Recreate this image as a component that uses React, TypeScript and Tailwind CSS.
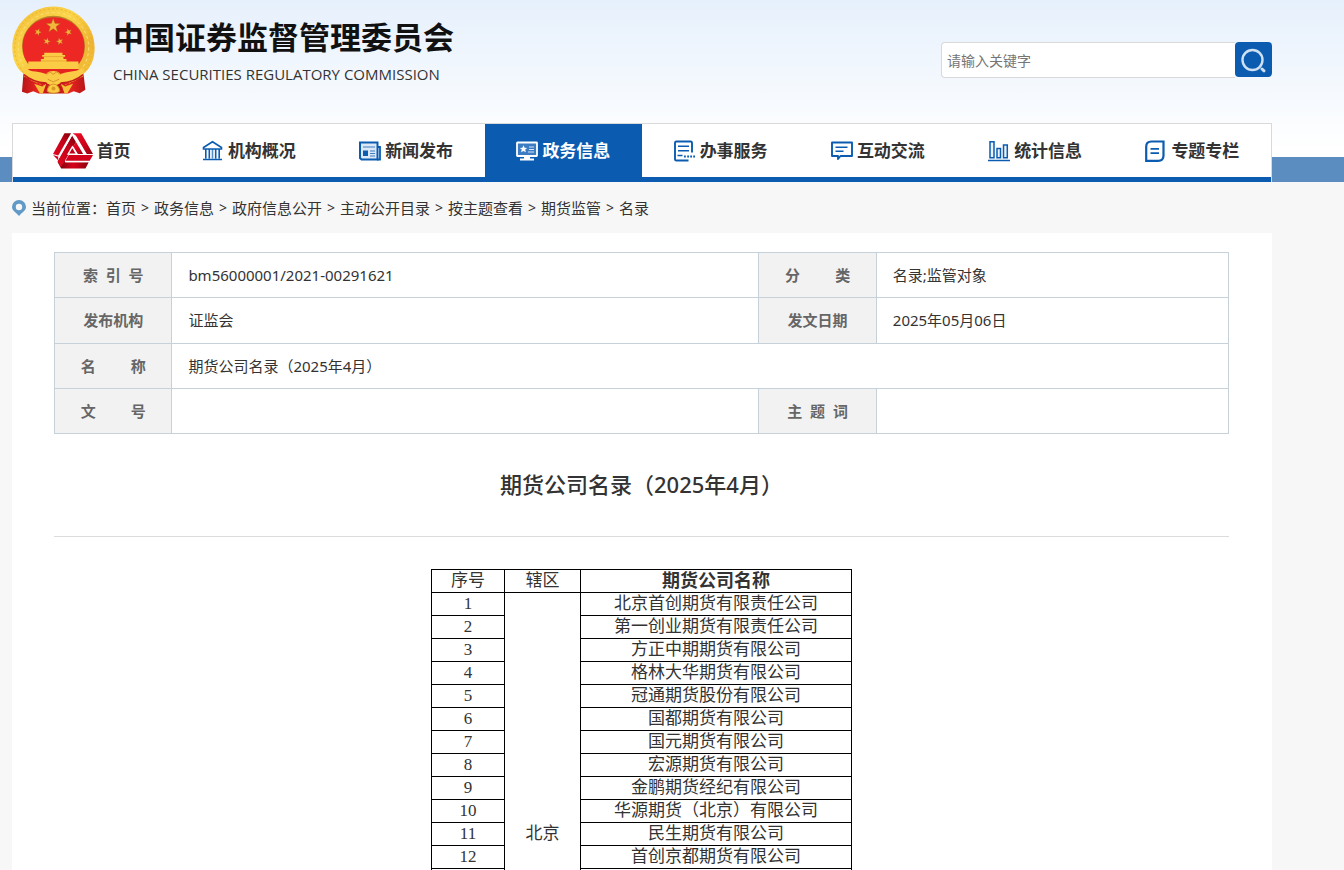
import type { ReactNode } from "react";

const STAR =
  "M0-10 2.4-3.2 9.5-3.1 3.8 1.2 5.9 8.1 0 4 -5.9 8.1 -3.8 1.2 -9.5-3.1 -2.4-3.2Z";

function Emblem() {
  return (
    <svg viewBox="36 16 250 264" className="h-[88px] w-[83px] shrink-0" aria-hidden="true">
      <defs>
        <linearGradient id="gold" x1="0" y1="0" x2="1" y2="1">
          <stop offset="0" stopColor="#f2bd3c" />
          <stop offset="0.4" stopColor="#fbd548" />
          <stop offset="0.7" stopColor="#eeb432" />
          <stop offset="1" stopColor="#f7c93f" />
        </linearGradient>
        <linearGradient id="drape" x1="0" y1="0" x2="1" y2="0">
          <stop offset="0" stopColor="#b81418" />
          <stop offset="0.25" stopColor="#e8251f" />
          <stop offset="0.5" stopColor="#a80f14" />
          <stop offset="0.75" stopColor="#e8251f" />
          <stop offset="1" stopColor="#b81418" />
        </linearGradient>
      </defs>
      <path d="M72 200 66 274 82 279 100 272 116 279H206L222 272 240 278 257 268 249 200Z" fill="url(#drape)" />
      <path d="M161 17C92 17 37 74 37 141c0 34 11 60 33 78 14 12 24 27 46 27h90c22 0 32-15 46-27 22-18 33-44 33-78C285 74 230 17 161 17Z" fill="url(#gold)" />
      <circle cx="161" cy="141" r="117" fill="none" stroke="#e3a52a" strokeWidth="2" strokeDasharray="6 7" />
      <circle cx="161" cy="141" r="106" fill="none" stroke="#fbe07a" strokeWidth="3" strokeDasharray="9 8" />
      <ellipse cx="161" cy="136" rx="95" ry="91" fill="#b9862a" />
      <path d="M161 49c53 0 93 38 93 88 0 20-5 38-16 52H84c-11-14-16-32-16-52 0-50 40-88 93-88Z" fill="#ec2724" />
      <g fill="#f2b63a" stroke="#b5521c" strokeWidth="0.6">
        <path d={STAR} transform="translate(160 75) scale(2.3)" />
        <path d={STAR} transform="translate(114 94) rotate(20) scale(1.15)" />
        <path d={STAR} transform="translate(206 94) rotate(-20) scale(1.15)" />
        <path d={STAR} transform="translate(141 122) rotate(15) scale(1.15)" />
        <path d={STAR} transform="translate(180 122) rotate(-15) scale(1.15)" />
      </g>
      <path d="M133 156h55v7h8v5h-5v7h9v8h36v22H85v-22h38v-8h9v-7h-5v-5h6Z" fill="#fbcb45" />
      <path d="M131 168h60M124 181h76" stroke="#e09a2c" strokeWidth="2" />
      <path d="M84 205h154l-20 18H104Z" fill="#e5241f" />
      <path d="M70 205c26 8 50 8 69 15 6-12 36-12 43 0 20-7 44-7 70-15l-1 22c-22 13-44 18-67 20l-23 12-23-12c-22-2-44-7-66-20Z" fill="#fbcb45" />
      <path d="M72 222c20 18 46 24 68 26M250 222c-20 18-46 24-68 26" fill="none" stroke="#c51d1c" strokeWidth="5" />
      <path d="M140 222l10-8 10 7 11-7 11 8M144 236l16 8 18-8" fill="none" stroke="#d8952a" strokeWidth="3" />
      <path d="M103 250l24 8 12-8-10 28h-9ZM220 250l-24 8-12-8 10 28h9Z" fill="#f6bf3a" />
      <path d="M142 272c2-28 35-28 38 0-10 8-28 8-38 0Z" fill="#fbcb45" stroke="#d18d22" strokeWidth="3" />
      <circle cx="161" cy="264" r="6" fill="#d99a25" />
    </svg>
  );
}

function KnotIcon() {
  return (
    <svg viewBox="0 0 122 109" className="h-9 w-10 shrink-0" aria-hidden="true">
      <defs>
        <linearGradient id="knotL" x1="0" y1="1" x2="1" y2="0">
          <stop offset="0" stopColor="#e00a22" />
          <stop offset="0.6" stopColor="#c40018" />
          <stop offset="1" stopColor="#7a000a" />
        </linearGradient>
        <linearGradient id="knotR" x1="0" y1="0" x2="1" y2="1">
          <stop offset="0" stopColor="#f01028" />
          <stop offset="0.6" stopColor="#cc001a" />
          <stop offset="1" stopColor="#8e000c" />
        </linearGradient>
        <linearGradient id="knotB" x1="0" y1="0" x2="1" y2="0">
          <stop offset="0" stopColor="#6e0008" />
          <stop offset="0.5" stopColor="#d8001c" />
          <stop offset="1" stopColor="#8a000c" />
        </linearGradient>
      </defs>
      <path d="M35 0H55L16 68 0 64Z" fill="url(#knotL)" />
      <path d="M0 67 17 72 15 82Z" fill="#d2001b" />
      <path d="M60 0H86L122 64H103L70 8Z" fill="url(#knotR)" />
      <path d="M38 89H109L99 108H25L14 88 26 70Z" fill="url(#knotB)" />
      <path d="M58 7 70 27 34 88 24 104 14 86Z" fill="url(#knotL)" />
      <path d="M70 27 92 64H76L61 40Z" fill="url(#knotR)" />
      <path d="M48 67H122L112 84H38Z" fill="#d2001b" />
      <path d="M57 6 17 75M68 12 98 64M37 87H110" stroke="#fff" strokeWidth="4" fill="none" />
      <path d="M59 42 46 64H72Z" fill="#c00018" stroke="#fff" strokeWidth="4" />
    </svg>
  );
}

function Glyph({ children }: { children: ReactNode }) {
  return (
    <svg viewBox="0 0 22 22" className="size-[22px] shrink-0" fill="none" stroke="currentColor" strokeWidth="1.8" aria-hidden="true">
      {children}
    </svg>
  );
}

const NAV: { label: string; icon: ReactNode; active?: boolean }[] = [
  { label: "首页", icon: <KnotIcon /> },
  {
    label: "机构概况",
    icon: (
      <Glyph>
        <path d="M10.500 1.800 1.500 7.500V9h18V7.500ZM3.800 9v9.500M7.300 9v9.500M13.700 9v9.500M17.200 9v9.500M1 19.500h19" strokeWidth="1.600" />
        <path d="M10.500 9v9.500" strokeWidth="1.600" opacity="0.7" />
      </Glyph>
    ),
  },
  {
    label: "新闻发布",
    icon: (
      <Glyph>
        <path d="M1 2.500h17.500v17H2.500L1 18Z" fill="#dce8f5" strokeWidth="2" />
        <path d="M18.500 7H21v12.500h-3" />
        <path d="M4 7h12M11 11h5M11 13.500h5M11 16h5" strokeWidth="1.200" opacity="0.750" />
        <path d="M4 10.500h5v5.500H4Z" fill="currentColor" stroke="none" />
      </Glyph>
    ),
  },
  {
    label: "政务信息",
    active: true,
    icon: (
      <Glyph>
        <rect x="1" y="2.500" width="20" height="13.500" rx="0.500" fill="#3b7cc3" />
        <path d="m7.500 5.300 1.100 2.400 2.600.2-2 1.700.7 2.700-2.400-1.400-2.400 1.400.7-2.700-2-1.700 2.600-.2Z" fill="currentColor" stroke="none" />
        <path d="M13 7h5M13 9.500h5M12 12h6" strokeWidth="1.100" opacity="0.800" />
        <path d="M8 16h6v2.500h4V20.500H4V18.500h4Z" fill="currentColor" stroke="none" />
      </Glyph>
    ),
  },
  {
    label: "办事服务",
    icon: (
      <Glyph>
        <path d="M18 12.500V2.800Q18 1.500 16.700 1.500H2.300Q1 1.500 1 2.800V19.200Q1 20.500 2.300 20.500H14.500" strokeWidth="1.900" />
        <path d="M4 6.200h11M4 10.800h11M3.500 15.500h5" strokeWidth="1.500" />
        <path d="M10 16.500h1.800M13.200 16.500h1.800M16.200 16.500h1.800M19.200 16.500h1.800" strokeWidth="1.800" />
      </Glyph>
    ),
  },
  {
    label: "互动交流",
    icon: (
      <Glyph>
        <path d="M1 2.500h20v13.500H9.500L7 19v-3H1Z" strokeWidth="1.900" strokeLinejoin="round" />
        <path d="M4.500 7.200h12M4.500 11.200h8" strokeWidth="1.400" />
      </Glyph>
    ),
  },
  {
    label: "统计信息",
    icon: (
      <Glyph>
        <path d="M2 1.700h4v16H2ZM9 8.500h3.500v9.200H9ZM15.500 5h3.800v12.700h-3.800Z" strokeWidth="1.500" fill="#eaf2fa" />
        <path d="M0 20.500h22" strokeWidth="1.500" />
      </Glyph>
    ),
  },
  {
    label: "专题专栏",
    icon: (
      <Glyph>
        <path d="M6.500 1.500H18.500V15.500Q18.500 20.800 13.200 20.800H1.200V6.800Q1.200 1.500 6.500 1.500Z" strokeWidth="2.200" />
        <path d="M5.500 8.800h8.500M5.500 13.200h8.500" strokeWidth="1.700" />
      </Glyph>
    ),
  },
];

const CRUMBS = ["首页", "政务信息", "政府信息公开", "主动公开目录", "按主题查看", "期货监管", "名录"];

const COMPANIES = [
  "北京首创期货有限责任公司",
  "第一创业期货有限责任公司",
  "方正中期期货有限公司",
  "格林大华期货有限公司",
  "冠通期货股份有限公司",
  "国都期货有限公司",
  "国元期货有限公司",
  "宏源期货有限公司",
  "金鹏期货经纪有限公司",
  "华源期货（北京）有限公司",
  "民生期货有限公司",
  "首创京都期货有限公司",
];

const REGION_ROWS = 21;

function Th({ children }: { children: ReactNode }) {
  return (
    <th scope="row" className="whitespace-pre border border-[#c6d1da] bg-[#f2f2f2] p-0 text-center font-bold text-[#666]">
      {children}
    </th>
  );
}

function Td({ children, colSpan }: { children?: ReactNode; colSpan?: number }) {
  return (
    <td colSpan={colSpan} className="border border-[#c6d1da] px-4 py-0 text-[#333]">
      {children}
    </td>
  );
}

export default function App() {
  const rows = Array.from({ length: REGION_ROWS }, (_, i) => COMPANIES[i] ?? "");
  return (
    <div className="h-screen overflow-y-auto bg-[#f7f7f7] font-['Noto_Sans','Noto_Sans_CJK_SC',sans-serif] text-[15px] leading-6 text-[#333] [scrollbar-width:none]">
      <header className="bg-[linear-gradient(#e6f0fc_0px,#ffffff_150px,#ffffff_157px,#5b8dc1_157px)] pl-3 pr-[72px]">
        <div className="flex h-[123px] items-start justify-between">
          <a href="#" className="flex items-start gap-[18px] pt-1.5">
            <Emblem />
            <span className="flex flex-col pt-2.5">
              <span className="text-[31px] font-bold leading-[42px] text-[#111]">中国证券监督管理委员会</span>
              <span className="font-['Open_Sans',sans-serif] text-[15px] leading-8 text-[#333]">
                CHINA SECURITIES REGULATORY COMMISSION
              </span>
            </span>
          </a>
          <form className="flex pt-[42px]" onSubmit={(e) => e.preventDefault()}>
            <input
              type="text"
              aria-label="请输入关键字"
              placeholder="请输入关键字"
              className="h-9 w-[294px] rounded-l border border-r-0 border-[#d9d9d9] bg-white px-[5px] text-sm placeholder:text-[#757575]"
            />
            <button type="submit" aria-label="搜索" className="flex h-[35px] w-[37px] items-center justify-center rounded bg-[#0b5cb1]">
              <svg viewBox="0 0 26 26" className="size-[26px]" fill="none" stroke="#cfe0f3" strokeWidth="2.400" strokeLinecap="round" aria-hidden="true">
                <circle cx="11.500" cy="13" r="10" />
                <path d="m21 22 2 1.800" strokeWidth="3" />
              </svg>
            </button>
          </form>
        </div>
        <nav className="flex border border-b-0 border-[#d9d9d9] bg-white">
          {NAV.map((item) => (
            <a
              key={item.label}
              href="#"
              className={
                item.active
                  ? "flex h-[58px] flex-1 items-center justify-center gap-1 border-b-[5px] border-[#0b5cb1] bg-[#0b5cb1] text-[17px] font-bold text-white"
                  : "flex h-[58px] flex-1 items-center justify-center gap-1 border-b-[5px] border-[#0b5cb1] text-[17px] font-bold text-[#0b5cb1]"
              }
            >
              {item.icon}
              <span className={item.active ? "text-white" : "text-[#333]"}>{item.label}</span>
            </a>
          ))}
        </nav>
      </header>

      <div className="pl-3 pr-[72px]">
        <nav aria-label="当前位置" className="flex h-[51px] items-center">
          <svg viewBox="0 0 14 16" className="mr-[5px] h-4 w-3.5" aria-hidden="true">
            <path d="M7 0a7 7 0 0 0-7 7c0 3.500 4 5.500 7 9 3-3.500 7-5.500 7-9a7 7 0 0 0-7-7Zm0 3.800a3.200 3.200 0 1 1 0 6.400 3.200 3.200 0 0 1 0-6.400Z" fill="#6199c7" />
          </svg>
          <span>当前位置：</span>
          {CRUMBS.map((c, i) => (
            <span key={c} className="flex">
              {i > 0 && <span className="w-[18px] text-center text-[14px]">&gt;</span>}
              <a href="#">{c}</a>
            </span>
          ))}
        </nav>

        <main className="bg-white pl-[42px] pr-[43px] pt-[19px]">
          <table className="h-[182px] w-full table-fixed border-collapse">
            <colgroup>
              <col className="w-[10%]" />
              <col className="w-[50%]" />
              <col className="w-[10%]" />
              <col className="w-[30%]" />
            </colgroup>
            <tbody>
              <tr>
                <Th>{"索\u00a0\u00a0引\u00a0\u00a0号"}</Th>
                <Td>bm56000001/2021-00291621</Td>
                <Th>{"分\u00a0\u00a0\u00a0\u00a0\u00a0\u00a0\u00a0\u00a0\u00a0类"}</Th>
                <Td>名录;监管对象</Td>
              </tr>
              <tr>
                <Th>发布机构</Th>
                <Td>证监会</Td>
                <Th>发文日期</Th>
                <Td>2025年05月06日</Td>
              </tr>
              <tr>
                <Th>{"名\u00a0\u00a0\u00a0\u00a0\u00a0\u00a0\u00a0\u00a0\u00a0称"}</Th>
                <Td colSpan={3}>期货公司名录（2025年4月）</Td>
              </tr>
              <tr>
                <Th>{"文\u00a0\u00a0\u00a0\u00a0\u00a0\u00a0\u00a0\u00a0\u00a0号"}</Th>
                <Td />
                <Th>{"主\u00a0\u00a0题\u00a0\u00a0词"}</Th>
                <Td />
              </tr>
            </tbody>
          </table>

          <h1 className="border-b border-[#dcdcdc] pb-[35px] pt-[33px] text-center text-[22px] font-medium leading-[34px]">
            期货公司名录（2025年4月）
          </h1>

          <table className="mx-auto mt-8 w-[421px] table-fixed border-collapse font-['Liberation_Serif','Noto_Sans_CJK_SC',serif] text-[17px] leading-[22px]">
            <colgroup>
              <col className="w-[73px]" />
              <col className="w-[76px]" />
              <col className="w-[271px]" />
            </colgroup>
            <thead>
              <tr>
                <th className="h-[23px] border border-black p-0 font-normal">序号</th>
                <th className="h-[23px] border border-black p-0 font-normal">辖区</th>
                <th className="h-[23px] border border-black p-0 text-[18px] font-bold">期货公司名称</th>
              </tr>
            </thead>
            <tbody className="text-center">
              {rows.map((name, i) => (
                <tr key={i}>
                  <td className="h-[23px] border border-black p-0">{name ? i + 1 : ""}</td>
                  {i === 0 && (
                    <td rowSpan={REGION_ROWS} className="border border-black p-0">
                      北京
                    </td>
                  )}
                  <td className="h-[23px] border border-black p-0">{name}</td>
                </tr>
              ))}
            </tbody>
          </table>
        </main>
      </div>
    </div>
  );
}
